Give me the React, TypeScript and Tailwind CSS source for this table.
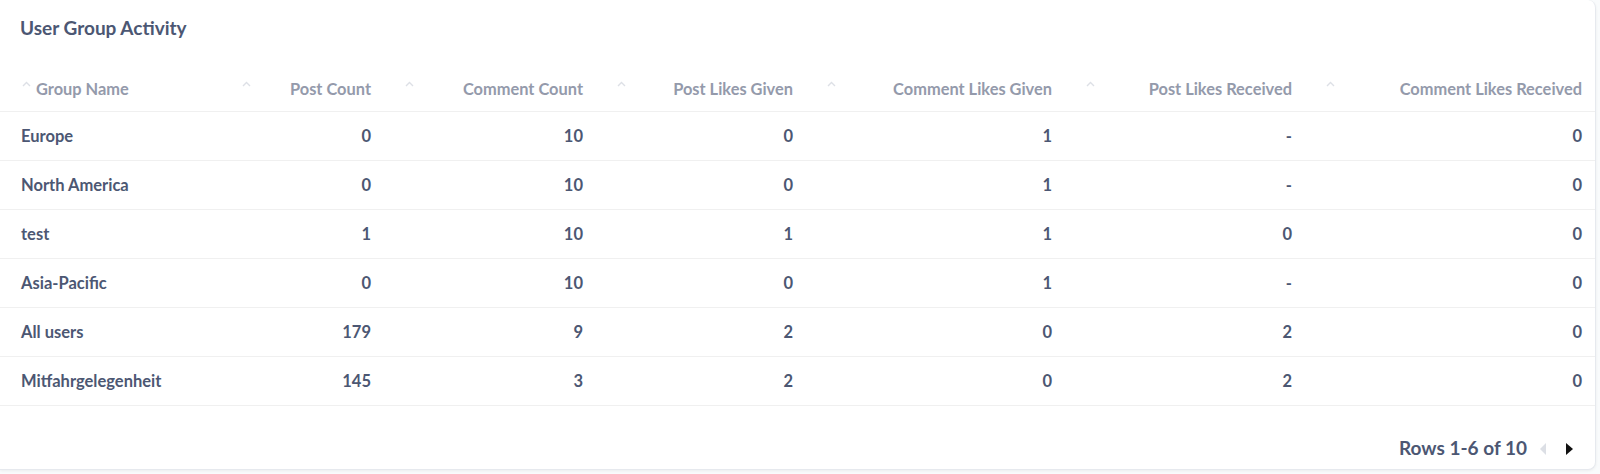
import React from 'react';

type Row = { name: string; values: string[] };

const columns = [
    'Group Name',
    'Post Count',
    'Comment Count',
    'Post Likes Given',
    'Comment Likes Given',
    'Post Likes Received',
    'Comment Likes Received',
];

const rows: Row[] = [
    { name: 'Europe', values: ['0', '10', '0', '1', '-', '0'] },
    { name: 'North America', values: ['0', '10', '0', '1', '-', '0'] },
    { name: 'test', values: ['1', '10', '1', '1', '0', '0'] },
    { name: 'Asia-Pacific', values: ['0', '10', '0', '1', '-', '0'] },
    { name: 'All users', values: ['179', '9', '2', '0', '2', '0'] },
    { name: 'Mitfahrgelegenheit', values: ['145', '3', '2', '0', '2', '0'] },
];

// column widths measured from the screenshot
const gridCols = 'grid grid-cols-[218px_163px_212px_210px_259px_240px_1fr]';

const SortCaret = () => (
    <svg width="9" height="6" viewBox="0 0 9 6" className="shrink-0 mt-[2px]">
        <path d="M1 5 L4.5 1.5 L8 5" fill="none" stroke="#dde0e6" strokeWidth="1.4" />
    </svg>
);

const App = () => {
    return (
        <div
            className="w-[1600px] h-[474px] bg-[#f9fbfc] pr-[4px] pb-[4px]"
            style={{ fontFamily: 'Lato, "Open Sans", sans-serif' }}
        >
            <div className="h-full bg-white rounded-br-lg rounded-tr-lg border-r border-b border-[#e6e9ee] shadow-[0_1px_3px_rgba(0,0,0,0.06)] flex flex-col">
                {/* Title */}
                <div className="pt-[17px] pl-[20px] h-[66px]">
                    <h2 className="text-[19px] leading-[22px] font-bold text-[#4c5773]">User Group Activity</h2>
                </div>

                {/* Header */}
                <div className={`${gridCols} h-[46px] border-b border-[#f0f0f0]`}>
                    {columns.map((col, i) => (
                        <div
                            key={col}
                            className={
                                i === 0
                                    ? 'flex items-center pl-[22px]'
                                    : i === columns.length - 1
                                      ? 'flex items-center pl-[24px] pr-[13px]'
                                      : 'flex items-center pl-[24px] pr-[10px]'
                            }
                        >
                            <div className="flex items-start w-full">
                                <SortCaret />
                                <span
                                    className={
                                        i === 0
                                            ? 'ml-[5px] text-[16.4px] leading-[20px] font-bold text-[#949aab]'
                                            : 'ml-auto text-[16.4px] leading-[20px] font-bold text-[#949aab]'
                                    }
                                >
                                    {col}
                                </span>
                            </div>
                        </div>
                    ))}
                </div>

                {/* Body */}
                {rows.map((row) => (
                    <div key={row.name} className={`${gridCols} h-[49px] border-b border-[#f0f0f0] items-center`}>
                        <div className="pl-[21px] text-[16.5px] font-bold text-[#4c5773]">{row.name}</div>
                        {row.values.map((v, i) => (
                            <div
                                key={i}
                                className={
                                    i === row.values.length - 1
                                        ? 'pr-[13px] text-right text-[16.5px] font-bold text-[#4c5773]'
                                        : 'pr-[10px] text-right text-[16.5px] font-bold text-[#4c5773]'
                                }
                            >
                                {v}
                            </div>
                        ))}
                    </div>
                ))}

                {/* Footer */}
                <div className="flex-1 flex items-center justify-end pr-[22px] pt-[22px]">
                    <span className="text-[19px] font-bold text-[#4c5773]">Rows 1-6 of 10</span>
                    <div className="flex items-center ml-[13px] gap-[20px]">
                        <svg width="6" height="12" viewBox="0 0 6 12">
                            <path d="M6 0 L0 6 L6 12 Z" fill="#dcdfe5" />
                        </svg>
                        <svg width="7" height="12" viewBox="0 0 7 12">
                            <path d="M0 0 L7 6 L0 12 Z" fill="#111" />
                        </svg>
                    </div>
                </div>
            </div>
        </div>
    );
};

export default App;
